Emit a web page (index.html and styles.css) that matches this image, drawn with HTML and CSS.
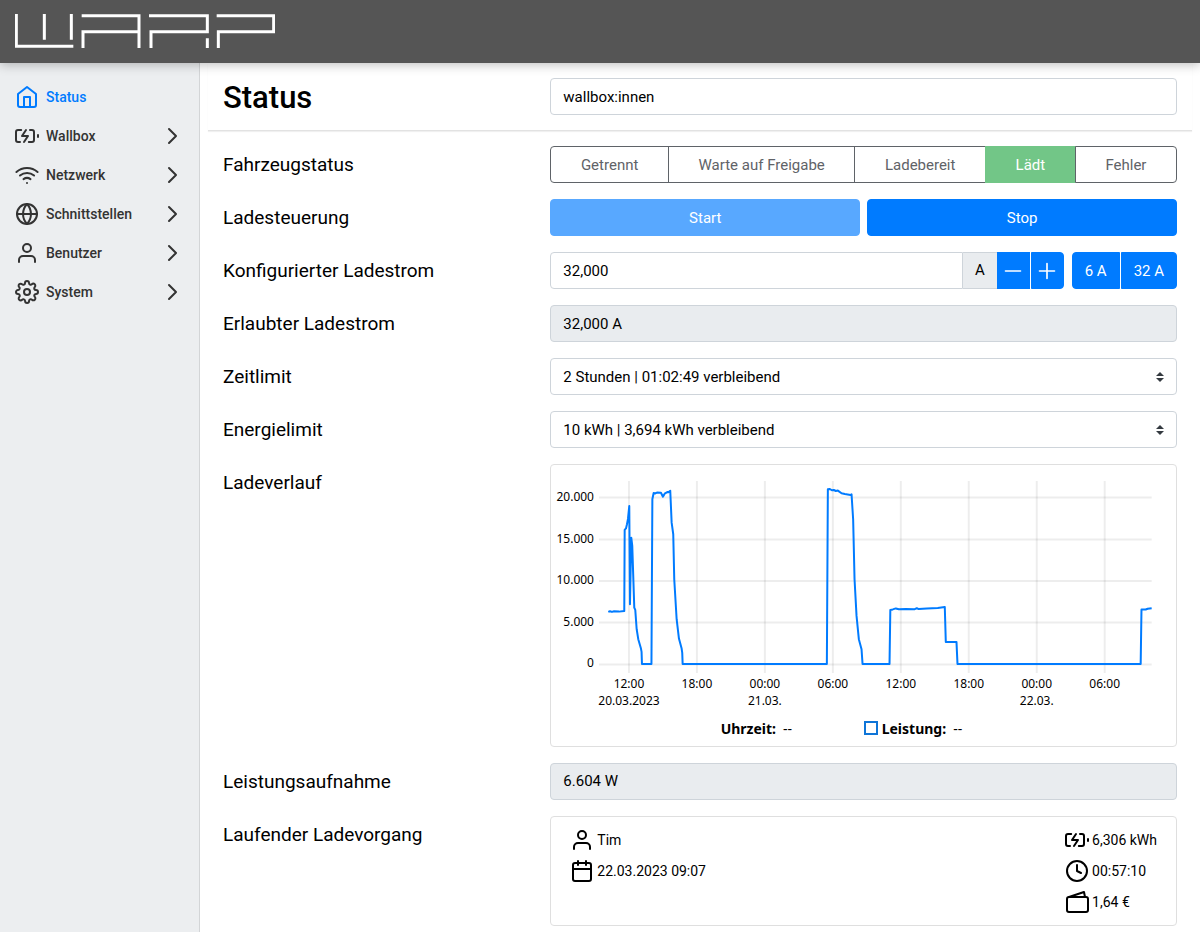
FILE: index.html
```html
<!DOCTYPE html>
<html lang="de">
<head>
    <meta charset="UTF-8">
    <meta name="viewport" content="width=device-width, initial-scale=1.0">
    <title>Status - WARP Charger</title>
    <link rel="stylesheet" href="styles.css">
</head>
<body>
    <svg class="sprite" aria-hidden="true">
        <symbol id="home" viewBox="0 0 24 24"><path d="M3 9l9-7 9 7v11a2 2 0 0 1-2 2H5a2 2 0 0 1-2-2z"/><path d="M9 22V12h6v10"/></symbol>
        <symbol id="battery" viewBox="0 0 24 24"><path d="M5 18H3a2 2 0 0 1-2-2V8a2 2 0 0 1 2-2h3.19M15 6h2a2 2 0 0 1 2 2v8a2 2 0 0 1-2 2h-3.19"/><path d="M23 13v-2"/><path d="M11 6l-4 6h6l-4 6"/></symbol>
        <symbol id="wifi" viewBox="0 0 24 24"><path d="M5 12.55a11 11 0 0 1 14.08 0"/><path d="M1.42 9a16 16 0 0 1 21.16 0"/><path d="M8.53 16.11a6 6 0 0 1 6.95 0"/><path d="M12 20h.01"/></symbol>
        <symbol id="globe" viewBox="0 0 24 24"><circle cx="12" cy="12" r="10"/><path d="M2 12h20"/><path d="M12 2a15.3 15.3 0 0 1 4 10 15.3 15.3 0 0 1-4 10 15.3 15.3 0 0 1-4-10 15.3 15.3 0 0 1 4-10z"/></symbol>
        <symbol id="user" viewBox="0 0 24 24"><path d="M20 21v-2a4 4 0 0 0-4-4H8a4 4 0 0 0-4 4v2"/><circle cx="12" cy="7" r="4"/></symbol>
        <symbol id="settings" viewBox="0 0 24 24"><circle cx="12" cy="12" r="3"/><path d="M19.4 15a1.65 1.65 0 0 0 .33 1.82l.06.06a2 2 0 0 1 0 2.83 2 2 0 0 1-2.83 0l-.06-.06a1.65 1.65 0 0 0-1.82-.33 1.65 1.65 0 0 0-1 1.51V21a2 2 0 0 1-2 2 2 2 0 0 1-2-2v-.09A1.65 1.65 0 0 0 9 19.4a1.65 1.65 0 0 0-1.82.33l-.06.06a2 2 0 0 1-2.83 0 2 2 0 0 1 0-2.83l.06-.06a1.65 1.65 0 0 0 .33-1.82 1.65 1.65 0 0 0-1.51-1H3a2 2 0 0 1-2-2 2 2 0 0 1 2-2h.09A1.65 1.65 0 0 0 4.6 9a1.65 1.65 0 0 0-.33-1.82l-.06-.06a2 2 0 0 1 0-2.83 2 2 0 0 1 2.83 0l.06.06a1.65 1.65 0 0 0 1.82.33H9a1.65 1.65 0 0 0 1-1.51V3a2 2 0 0 1 2-2 2 2 0 0 1 2 2v.09a1.65 1.65 0 0 0 1 1.51 1.65 1.65 0 0 0 1.82-.33l.06-.06a2 2 0 0 1 2.83 0 2 2 0 0 1 0 2.83l-.06.06a1.65 1.65 0 0 0-.33 1.82V9a1.65 1.65 0 0 0 1.51 1H21a2 2 0 0 1 2 2 2 2 0 0 1-2 2h-.09a1.65 1.65 0 0 0-1.51 1z"/></symbol>
        <symbol id="chevron" viewBox="0 0 24 24"><path d="M9 19l7-7-7-7"/></symbol>
        <symbol id="calendar" viewBox="0 0 24 24"><rect x="3" y="4" width="18" height="18" rx="2"/><path d="M16 2v4M8 2v4M3 10h18"/></symbol>
        <symbol id="clock" viewBox="0 0 24 24"><circle cx="12" cy="12" r="10"/><path d="M12 6v6l4 2"/></symbol>
        <symbol id="wallet" viewBox="0 0 24 24"><rect x="2" y="7" width="21" height="15" rx="2"/><path d="M4 7l15-5 1 5"/></symbol>
        <symbol id="minus" viewBox="0 0 24 24"><path d="M3 12h18"/></symbol>
        <symbol id="plus" viewBox="0 0 24 24"><path d="M12 3v18M3 12h18"/></symbol>
    </svg>

    <header class="navbar">
        <svg class="logo" viewBox="0 0 780 102" role="img" aria-label="WARP">
            <path d="M4 0v97h171M88 0v77M169 0v77"/>
            <path d="M200 5h172v97M204 102V53h168"/>
            <path d="M402 5h175v48H408v49M577 73v29"/>
            <path d="M605 5h171v48H610v49"/>
        </svg>
    </header>

    <div class="page">
        <nav class="sidebar">
            <a class="nav-link active" href="#status"><svg class="icon"><use href="#home"/></svg>Status</a>
            <a class="nav-link" href="#wallbox"><svg class="icon"><use href="#battery"/></svg>Wallbox<svg class="icon chevron"><use href="#chevron"/></svg></a>
            <a class="nav-link" href="#netzwerk"><svg class="icon"><use href="#wifi"/></svg>Netzwerk<svg class="icon chevron"><use href="#chevron"/></svg></a>
            <a class="nav-link" href="#schnittstellen"><svg class="icon"><use href="#globe"/></svg>Schnittstellen<svg class="icon chevron"><use href="#chevron"/></svg></a>
            <a class="nav-link" href="#benutzer"><svg class="icon"><use href="#user"/></svg>Benutzer<svg class="icon chevron"><use href="#chevron"/></svg></a>
            <a class="nav-link" href="#system"><svg class="icon"><use href="#settings"/></svg>System<svg class="icon chevron"><use href="#chevron"/></svg></a>
        </nav>

        <main class="content">
            <div class="row title-row">
                <h1><label for="name">Status</label></h1>
                <input class="form-control" id="name" type="text" value="wallbox:innen">
            </div>

            <div class="rows">
                <div class="row">
                    <span class="label" id="state-label">Fahrzeugstatus</span>
                    <div class="btn-group states" role="group" aria-labelledby="state-label">
                        <button class="btn btn-outline" disabled>Getrennt</button>
                        <button class="btn btn-outline" disabled>Warte auf Freigabe</button>
                        <button class="btn btn-outline" disabled>Ladebereit</button>
                        <button class="btn btn-success" disabled>Lädt</button>
                        <button class="btn btn-outline" disabled>Fehler</button>
                    </div>
                </div>
                <div class="row">
                    <span class="label">Ladesteuerung</span>
                    <div class="controls">
                        <button class="btn btn-primary" disabled>Start</button>
                        <button class="btn btn-primary">Stop</button>
                    </div>
                </div>
                <div class="row">
                    <label class="label" for="current">Konfigurierter Ladestrom</label>
                    <div class="current">
                        <div class="input-group">
                            <input class="form-control" id="current" type="text" value="32,000">
                            <span class="unit">A</span>
                            <button class="btn btn-primary btn-step" aria-label="Verringern"><svg class="icon"><use href="#minus"/></svg></button>
                            <button class="btn btn-primary btn-step" aria-label="Erhöhen"><svg class="icon"><use href="#plus"/></svg></button>
                        </div>
                        <div class="btn-group presets">
                            <button class="btn btn-primary">6 A</button>
                            <button class="btn btn-primary">32 A</button>
                        </div>
                    </div>
                </div>
                <div class="row">
                    <label class="label" for="allowed">Erlaubter Ladestrom</label>
                    <input class="form-control" id="allowed" type="text" value="32,000 A" readonly>
                </div>
                <div class="row">
                    <label class="label" for="time-limit">Zeitlimit</label>
                    <select class="form-control" id="time-limit">
                        <option>2 Stunden | 01:02:49 verbleibend</option>
                    </select>
                </div>
                <div class="row">
                    <label class="label" for="energy-limit">Energielimit</label>
                    <select class="form-control" id="energy-limit">
                        <option>10 kWh | 3,694 kWh verbleibend</option>
                    </select>
                </div>
                <div class="row">
                    <span class="label">Ladeverlauf</span>
                    <div class="card">
                        <svg class="chart" viewBox="0 0 625 246" role="img" aria-label="Ladeverlauf">
                            <path class="grid" d="M48 32.5h553M48 74.5h553M48 116h553M48 157.5h553M48 199.5h553"/>
                            <path class="grid" d="M78 16v192M146 16v192M214 16v192M282 16v192M350 16v192M418 16v192M486 16v192M554 16v192"/>
                            <g class="y-axis">
                                <text x="43" y="36">20.000</text>
                                <text x="43" y="78">15.000</text>
                                <text x="43" y="119">10.000</text>
                                <text x="43" y="161">5.000</text>
                                <text x="43" y="202">0</text>
                            </g>
                            <g class="x-axis">
                                <text x="78" y="223">12:00</text>
                                <text x="78" y="240">20.03.2023</text>
                                <text x="146" y="223">18:00</text>
                                <text x="214" y="223">00:00</text>
                                <text x="214" y="240">21.03.</text>
                                <text x="282" y="223">06:00</text>
                                <text x="350" y="223">12:00</text>
                                <text x="418" y="223">18:00</text>
                                <text x="486" y="223">00:00</text>
                                <text x="486" y="240">22.03.</text>
                                <text x="554" y="223">06:00</text>
                            </g>
                            <polyline class="power" points="57.3,147 59,146.3 61,147 63,146.4 68,146.7 73.3,146 73.7,65 75,63.5 76,59.3 77,54 78.3,41 79,139.3 80.3,72.7 81.3,81 83.3,142.7 84.3,145 85.7,164.3 87.3,174.3 90,183.7 90.6,187 91,199 100.5,199 101.4,34.3 102.7,28 104,28.5 106,27.6 110,27.8 112,31.7 114,28.3 116.7,27 117.5,27.3 119.3,25.7 120.7,57.7 122.3,69.3 123.3,114.3 125.7,154.3 128,173.7 130.7,183.7 131.3,188 131.7,199 276,199 277,24.3 279,24 281,25.3 283,25 285,26 287,25.6 290.7,28.3 294,29 299.7,30 300.7,29.3 302.3,54.3 303.7,114.3 305.7,151 308,174.3 310.7,184.3 311.7,199 338.7,199 339.5,145 342,144.5 345,143.5 348,144.3 355,144 364,144.3 366,143.3 368,144.2 376,143.5 387,143 394,142 395,177 405.7,177 406.7,199 590,199 590.8,144.6 595,144.6 597,143.8 601,143.3"/>
                        </svg>
                        <div class="legend">
                            <div class="legend-item"><b>Uhrzeit:</b> --</div>
                            <div class="legend-item"><i class="marker"></i><b>Leistung:</b> --</div>
                        </div>
                    </div>
                </div>
                <div class="row">
                    <label class="label" for="power">Leistungsaufnahme</label>
                    <input class="form-control" id="power" type="text" value="6.604 W" readonly>
                </div>
                <div class="row">
                    <span class="label">Laufender Ladevorgang</span>
                    <div class="card charge">
                        <div>
                            <div class="charge-item"><svg class="icon"><use href="#user"/></svg>Tim</div>
                            <div class="charge-item"><svg class="icon"><use href="#calendar"/></svg>22.03.2023 09:07</div>
                        </div>
                        <div>
                            <div class="charge-item"><svg class="icon"><use href="#battery"/></svg>6,306 kWh</div>
                            <div class="charge-item"><svg class="icon"><use href="#clock"/></svg>00:57:10</div>
                            <div class="charge-item"><svg class="icon"><use href="#wallet"/></svg>1,64 €</div>
                        </div>
                    </div>
                </div>
            </div>
        </main>
    </div>
</body>
</html>
```
FILE: styles.css
```css
* {
    box-sizing: border-box;
}
body {
    margin: 0;
    min-height: 100vh;
    display: flex;
    flex-direction: column;
    font-family: Roboto, "Liberation Sans", sans-serif;
    font-size: 15px;
    line-height: 24px;
    color: #000;
    background: #fff;
}
.sprite {
    display: none;
}
.icon {
    width: 24px;
    height: 24px;
    flex: none;
    fill: none;
    stroke: currentColor;
    stroke-width: 2;
    stroke-linecap: round;
    stroke-linejoin: round;
}

/* Kopfzeile */
.navbar {
    position: relative;
    z-index: 1;
    height: 63px;
    padding: 14px 15px;
    background: #555;
    box-shadow: 0 2px 10px rgba(0, 0, 0, 0.25);
}
.logo {
    display: block;
    width: 260px;
    height: 34px;
    fill: none;
    stroke: #fff;
    stroke-width: 9;
}
.page {
    flex: 1;
    display: flex;
}

/* Navigation */
.sidebar {
    width: 200px;
    flex: none;
    padding-top: 14px;
    background: #eceef0;
    border-right: 1px solid #d3d5d7;
}
.nav-link {
    display: flex;
    align-items: center;
    gap: 7px;
    height: 39px;
    padding: 0 15px;
    font-size: 14px;
    font-weight: 500;
    color: #333;
    text-decoration: none;
}
.nav-link.active {
    color: #007bff;
}
.chevron {
    margin-left: auto;
}

/* Inhalt */
.content {
    flex: 1;
    min-width: 0;
    padding: 0 8px;
}
.row {
    display: grid;
    grid-template-columns: 1fr 2fr;
    column-gap: 14px;
}
.row > * {
    min-width: 0;
}
.title-row {
    padding: 15px 15px 12px;
    border-bottom: 1px solid #e2e2e2;
    box-shadow: 0 1px 1px #f0f0f0;
}
h1 {
    margin: 0;
    font-size: 31px;
    line-height: 40px;
    font-weight: 500;
}
.rows {
    display: flex;
    flex-direction: column;
    gap: 16px;
    padding: 15px 15px 0;
}
.label {
    font-size: 19px;
    line-height: 38px;
    height: 37px;
}
.form-control {
    display: block;
    width: 100%;
    height: 37px;
    padding: 0 12px;
    font: inherit;
    color: #000;
    background: #fff;
    border: 1px solid #ced4da;
    border-radius: 4px;
}
.form-control:read-only:not(select) {
    background: #e9ecef;
}
select.form-control {
    appearance: none;
    background: #fff url("data:image/svg+xml;charset=UTF-8,%3csvg xmlns='http://www.w3.org/2000/svg' viewBox='0 0 4 5'%3e%3cpath fill='%23343a40' d='M2 0L0 2h4zm0 5L0 3h4z'/%3e%3c/svg%3e") no-repeat right 12px center;
    background-size: 8px 10px;
}

/* Buttons */
.btn {
    height: 37px;
    padding: 0 12px;
    font: inherit;
    border: 1px solid transparent;
    border-radius: 4px;
}
.btn-primary {
    color: #fff;
    background: #007bff;
    border-color: #007bff;
}
.btn-primary:disabled {
    opacity: 0.65;
}
.btn-outline {
    color: #5f6368;
    background: #fff;
    border-color: #5f6368;
}
.btn-success {
    color: #fff;
    background: #72c687;
    border-color: #72c687;
}
.btn-group {
    display: flex;
}
.btn-group .btn:not(:first-child) {
    border-top-left-radius: 0;
    border-bottom-left-radius: 0;
}
.btn-group .btn:not(:last-child) {
    border-top-right-radius: 0;
    border-bottom-right-radius: 0;
}
.states .btn {
    flex: 1 1 auto;
}
.states .btn:not(:first-child) {
    margin-left: -1px;
}
.presets {
    gap: 1px;
}
.controls {
    display: flex;
    gap: 7px;
}
.controls .btn {
    flex: 1;
}
.current {
    display: flex;
    gap: 8px;
}
.input-group {
    display: flex;
    flex: 1;
}
.input-group .form-control {
    flex: 1;
    min-width: 0;
    border-radius: 4px 0 0 4px;
}
.unit {
    padding: 0 12px;
    line-height: 35px;
    background: #e9ecef;
    border: 1px solid #ced4da;
    border-width: 1px 0;
}
.btn-step {
    display: flex;
    align-items: center;
    justify-content: center;
    width: 33px;
    padding: 0;
    border-radius: 0;
}
.btn-step .icon {
    width: 20px;
    height: 20px;
}
.btn-step:last-child {
    margin-left: 1px;
    border-radius: 0 4px 4px 0;
}

/* Diagramm */
.card {
    border: 1px solid #dfdfdf;
    border-radius: 4px;
}
.chart {
    display: block;
    width: 100%;
    height: auto;
    font-family: "Noto Sans", sans-serif;
    font-size: 12px;
}
.grid {
    stroke: rgba(0, 0, 0, 0.07);
    stroke-width: 2;
}
.y-axis {
    text-anchor: end;
}
.x-axis {
    text-anchor: middle;
}
.power {
    fill: none;
    stroke: #007bff;
    stroke-width: 2;
    stroke-linejoin: round;
}
.legend {
    display: flex;
    justify-content: center;
    font-family: "Noto Sans", sans-serif;
    font-size: 14px;
    line-height: 35px;
}
.legend-item {
    display: flex;
    align-items: center;
    gap: 7px;
    width: 143px;
}
.marker {
    width: 14px;
    height: 14px;
    margin-right: -3px;
    border: 2px solid #0f75d8;
}

/* Ladevorgang */
.charge {
    display: flex;
    justify-content: space-between;
    padding: 8px 19px 7px;
}
.charge-item {
    display: flex;
    align-items: center;
    gap: 3px;
    height: 31px;
    font-size: 14px;
}
```
